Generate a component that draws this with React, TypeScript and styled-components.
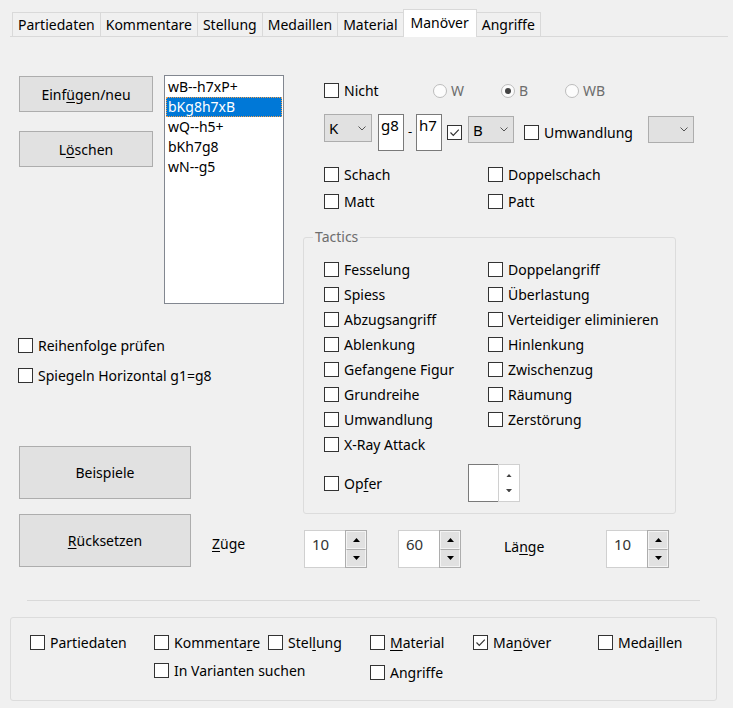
import React from 'react';
import styled, { createGlobalStyle } from 'styled-components';

const GlobalStyle = createGlobalStyle`
  html, body { margin: 0; padding: 0; background: #f0f0f0; }
  body {
    font-family: "Noto Sans", "Open Sans", sans-serif;
    font-size: 14px;
    color: #000;
  }
`;

const Window = styled.div`
  width: 733px;
  height: 708px;
  background: #f0f0f0;
  overflow: hidden;
`;

/* ---------- tabs ---------- */

const TabBar = styled.div`
  display: flex;
  align-items: flex-end;
  height: 37px;
  box-sizing: border-box;
  margin: 0 5px 0 10px;
  padding-left: 3px;
  border-bottom: 1px solid #d9d9d9;
`;

const Tab = styled.div<{ $active?: boolean }>`
  height: ${(p) => (p.$active ? 28 : 25)}px;
  box-sizing: border-box;
  margin-bottom: -1px;
  margin-left: -1px;
  padding: 0 ${(p) => (p.$active ? 7 : 5)}px ${(p) => (p.$active ? 3 : 0)}px;
  display: flex;
  align-items: center;
  border: 1px solid #d9d9d9;
  border-bottom: ${(p) => (p.$active ? 'none' : '1px solid #d9d9d9')};
  background: ${(p) => (p.$active ? '#fff' : '#f0f0f0')};
  position: relative;
  z-index: ${(p) => (p.$active ? 1 : 0)};
  white-space: nowrap;
`;

/* ---------- generic controls ---------- */

const U = styled.span`
  text-decoration: underline;
  text-underline-offset: 2px;
`;

const PushButton = styled.button<{ $w: number; $h: number }>`
  width: ${(p) => p.$w}px;
  height: ${(p) => p.$h}px;
  padding: 0;
  border: 1px solid #adadad;
  background: #e1e1e1;
  font: inherit;
  color: #000;
  flex-shrink: 0;
`;

const CheckItem = styled.label<{ $w?: number; $dy?: number }>`
  display: flex;
  align-items: center;
  gap: 5px;
  height: 15px;
  width: ${(p) => (p.$w ? `${p.$w}px` : 'auto')};
  margin-top: ${(p) => p.$dy ?? 0}px;
  white-space: nowrap;
  flex-shrink: 0;
`;

const Box = styled.span`
  width: 15px;
  height: 15px;
  box-sizing: border-box;
  border: 1px solid #333;
  background: #fff;
  display: flex;
  align-items: center;
  justify-content: center;
  flex-shrink: 0;
`;

const Check = ({ label, checked, w, dy }: { label?: React.ReactNode; checked?: boolean; w?: number; dy?: number }) => (
  <CheckItem $w={w} $dy={dy}>
    <Box>
      {checked && (
        <svg width="13" height="13" viewBox="0 0 13 13">
          <polyline points="2.5,6.5 5.3,9.3 10.8,3.6" fill="none" stroke="#333" strokeWidth="1.2" />
        </svg>
      )}
    </Box>
    {label && <span>{label}</span>}
  </CheckItem>
);

const RadioItem = styled.label<{ $w: number }>`
  display: flex;
  align-items: center;
  gap: 4px;
  width: ${(p) => p.$w}px;
  color: #6d6d6d;
  flex-shrink: 0;
`;

const RadioCircle = styled.span`
  width: 14px;
  height: 14px;
  box-sizing: border-box;
  border: 1px solid #bcbcbc;
  border-radius: 50%;
  background: #fcfcfc;
  display: flex;
  align-items: center;
  justify-content: center;
`;

const RadioDot = styled.span`
  width: 6px;
  height: 6px;
  border-radius: 50%;
  background: #444;
`;

const Radio = ({ label, on, w }: { label: string; on?: boolean; w: number }) => (
  <RadioItem $w={w}>
    <RadioCircle>{on && <RadioDot />}</RadioCircle>
    <span>{label}</span>
  </RadioItem>
);

const ComboBox = styled.div<{ $w: number; $h: number; $dy?: number; $ml?: number }>`
  width: ${(p) => p.$w}px;
  height: ${(p) => p.$h}px;
  margin-top: ${(p) => p.$dy ?? 0}px;
  margin-left: ${(p) => p.$ml ?? 0}px;
  box-sizing: border-box;
  border: 1px solid #adadad;
  background: #e1e1e1;
  display: flex;
  align-items: center;
  justify-content: space-between;
  padding: 0 5px 0 4px;
  font-size: 15px;
  flex-shrink: 0;
`;

const Chevron = () => (
  <svg width="8" height="5" viewBox="0 0 8 5">
    <polyline points="0.5,0.5 4,4 7.5,0.5" fill="none" stroke="#555" strokeWidth="1" />
  </svg>
);

const Combo = ({ value, w, h, dy, ml }: { value?: string; w: number; h: number; dy?: number; ml?: number }) => (
  <ComboBox $w={w} $h={h} $dy={dy} $ml={ml}>
    <span>{value ?? ''}</span>
    <Chevron />
  </ComboBox>
);

const SquareEdit = styled.div<{ $ml?: number }>`
  width: 26px;
  height: 37px;
  box-sizing: border-box;
  margin-left: ${(p) => p.$ml ?? 0}px;
  border: 1px solid #7a7a7a;
  background: #fff;
  padding: 1px 0 0 2px;
  font-size: 15px;
  line-height: 19px;
  flex-shrink: 0;
  overflow: hidden;
`;

const Dash = styled.span`
  width: 12px;
  text-align: center;
  margin-top: 8px;
  line-height: 18px;
  font-size: 13px;
`;

/* ---------- spin boxes ---------- */

const Spin = styled.div`
  display: flex;
  width: 63px;
  height: 38px;
  margin-top: 16px;
  flex-shrink: 0;
`;

const SpinEdit = styled.div`
  flex: 1;
  box-sizing: border-box;
  border: 1px solid #d0d0d0;
  border-right: none;
  background: #fff;
  padding: 4px 0 0 7px;
  font-size: 15px;
  line-height: 18px;
  color: #333;
`;

const SpinButtons = styled.div`
  width: 20px;
  display: flex;
  flex-direction: column;
  border: 1px solid #adadad;
`;

const SpinBtn = styled.div`
  flex: 1;
  background: #e1e1e1;
  border: 1px solid #f4f4f4;
  display: flex;
  align-items: center;
  justify-content: center;
  & + & { border-top: 1px solid #adadad; }
`;

const Tri = ({ down, color = '#000', w = 7 }: { down?: boolean; color?: string; w?: number }) => (
  <svg width={w} height={w / 2 + 0.5} viewBox="0 0 7 4">
    <polygon points={down ? '0,0 7,0 3.5,4' : '0,4 7,4 3.5,0'} fill={color} />
  </svg>
);

const SpinBox = ({ value }: { value: string }) => (
  <Spin>
    <SpinEdit>{value}</SpinEdit>
    <SpinButtons>
      <SpinBtn><Tri /></SpinBtn>
      <SpinBtn><Tri down /></SpinBtn>
    </SpinButtons>
  </Spin>
);

const FlatSpin = styled.div`
  display: flex;
  width: 52px;
  height: 38px;
`;

const FlatSpinEdit = styled.div`
  width: 30px;
  box-sizing: border-box;
  border: 1px solid #7a7a7a;
  border-right: none;
  background: #fff;
`;

const FlatSpinButtons = styled.div`
  flex: 1;
  border: 1px solid #d0d0d0;
  background: #fff;
  display: flex;
  flex-direction: column;
  justify-content: space-around;
  align-items: center;
  padding: 3px 0;
`;

/* ---------- main layout ---------- */

const Body = styled.div`
  display: flex;
  flex-direction: column;
  padding-left: 18px;
`;

const TopSection = styled.div`
  display: flex;
  align-items: flex-start;
`;

const LeftPane = styled.div`
  width: 266px;
  padding-top: 38px;
  display: flex;
  flex-direction: column;
`;

const ListRow = styled.div`
  display: flex;
  align-items: flex-start;
`;

const ButtonColumn = styled.div`
  display: flex;
  flex-direction: column;
  gap: 19px;
  margin: 1px 0 0 1px;
`;

const ListBox = styled.div`
  width: 120px;
  height: 229px;
  box-sizing: border-box;
  margin-left: 11px;
  border: 1px solid #828790;
  background: #fff;
  padding: 1px;
`;

const ListItem = styled.div<{ $selected?: boolean }>`
  height: 20px;
  line-height: 20px;
  padding-left: 2px;
  font-size: 14px;
  box-sizing: border-box;
  background: ${(p) => (p.$selected ? '#0078d7' : 'transparent')};
  color: ${(p) => (p.$selected ? '#fff' : '#000')};
  outline: ${(p) => (p.$selected ? '1px dotted #f0a050' : 'none')};
  outline-offset: -1px;
`;

const LeftChecks = styled.div`
  display: flex;
  flex-direction: column;
  gap: 15px;
  margin-top: 34px;
`;

const ExamplesButton = styled(PushButton)`
  margin: 63px 0 0 1px;
`;

const RightPane = styled.div`
  width: 392px;
  margin-left: 19px;
  padding-top: 46px;
  display: flex;
  flex-direction: column;
`;

const ColorRow = styled.div`
  display: flex;
  align-items: center;
  height: 15px;
  padding-left: 21px;
`;

const MoveRow = styled.div`
  display: flex;
  align-items: flex-start;
  height: 37px;
  margin-top: 16px;
  padding-left: 21px;
`;

const TwoColumns = styled.div<{ $gap: number }>`
  display: grid;
  grid-template-columns: 164px auto;
  grid-auto-rows: 15px;
  row-gap: ${(p) => p.$gap}px;
`;

const CheckGrid = styled(TwoColumns)`
  margin-top: 16px;
  padding-left: 21px;
`;

const Group = styled.fieldset`
  width: 373px;
  box-sizing: border-box;
  margin: 20px 0 0 0;
  padding: 0 0 11px 20px;
  border: 1px solid #dcdcdc;
  border-radius: 3px;
  min-width: 0;
`;

const GroupTitle = styled.legend`
  margin-left: -11px;
  padding: 0 2px;
  line-height: 16px;
  font-size: 14px;
  color: #6d6d6d;
`;

const TacticsGrid = styled(TwoColumns)`
  margin-top: 17px;
`;

const SacrificeRow = styled.div`
  display: flex;
  align-items: center;
  height: 38px;
  margin-top: 12px;
`;

const BottomRow = styled.div`
  display: flex;
  align-items: flex-start;
  padding-left: 1px;
`;

const FieldLabel = styled.div<{ $ml: number; $w: number; $dy: number }>`
  margin-left: ${(p) => p.$ml}px;
  width: ${(p) => p.$w}px;
  margin-top: ${(p) => p.$dy}px;
  line-height: 18px;
  flex-shrink: 0;
`;

const Gap = styled.div<{ $w: number }>`
  width: ${(p) => p.$w}px;
  flex-shrink: 0;
`;

const Divider = styled.div`
  width: 673px;
  height: 1px;
  margin: 32px 0 0 27px;
  background: #d9d9d9;
`;

const SearchGroup = styled.div`
  width: 707px;
  height: 84px;
  box-sizing: border-box;
  margin: 16px 0 0 10px;
  padding: 17px 0 0 19px;
  border: 1px solid #dcdcdc;
  border-radius: 3px;
`;

const SearchGrid = styled.div`
  display: grid;
  grid-template-columns: 124px 114px 102px 103px 125px auto;
  grid-auto-rows: 15px;
  row-gap: 13px;
`;

const tabs = ['Partiedaten', 'Kommentare', 'Stellung', 'Medaillen', 'Material', 'Manöver', 'Angriffe'];
const moves = ['wB--h7xP+', 'bKg8h7xB', 'wQ--h5+', 'bKh7g8', 'wN--g5'];
const tactics: [string, string?][] = [
  ['Fesselung', 'Doppelangriff'],
  ['Spiess', 'Überlastung'],
  ['Abzugsangriff', 'Verteidiger eliminieren'],
  ['Ablenkung', 'Hinlenkung'],
  ['Gefangene Figur', 'Zwischenzug'],
  ['Grundreihe', 'Räumung'],
  ['Umwandlung', 'Zerstörung'],
  ['X-Ray Attack'],
];

export default function App() {
  return (
    <Window>
      <GlobalStyle />
      <TabBar>
        {tabs.map((t) => (
          <Tab key={t} $active={t === 'Manöver'}>{t}</Tab>
        ))}
      </TabBar>

      <Body>
        <TopSection>
          <LeftPane>
            <ListRow>
              <ButtonColumn>
                <PushButton $w={134} $h={36}>Einf<U>ü</U>gen/neu</PushButton>
                <PushButton $w={134} $h={36}>L<U>ö</U>schen</PushButton>
              </ButtonColumn>
              <ListBox>
                {moves.map((m, i) => (
                  <ListItem key={m} $selected={i === 1}>{m}</ListItem>
                ))}
              </ListBox>
            </ListRow>
            <LeftChecks>
              <Check label="Reihenfolge prüfen" />
              <Check label="Spiegeln Horizontal g1=g8" />
            </LeftChecks>
            <ExamplesButton $w={172} $h={53}>Beispiele</ExamplesButton>
          </LeftPane>

          <RightPane>
            <ColorRow>
              <Check label="Nicht" w={109} />
              <Radio label="W" w={68} />
              <Radio label="B" on w={64} />
              <Radio label="WB" w={60} />
            </ColorRow>

            <MoveRow>
              <Combo value="K" w={48} h={28} />
              <SquareEdit $ml={6}>g8</SquareEdit>
              <Dash>-</Dash>
              <SquareEdit>h7</SquareEdit>
              <Gap $w={5} />
              <Check checked dy={11} />
              <Combo value="B" w={46} h={27} dy={2} ml={6} />
              <Gap $w={10} />
              <Check label="Umwandlung" w={124} dy={11} />
              <Combo w={46} h={27} dy={2} />
            </MoveRow>

            <CheckGrid $gap={12}>
              <Check label="Schach" />
              <Check label="Doppelschach" />
              <Check label="Matt" />
              <Check label="Patt" />
            </CheckGrid>

            <Group>
              <GroupTitle>Tactics</GroupTitle>
              <TacticsGrid $gap={10}>
                {tactics.map(([a, b]) => (
                  <React.Fragment key={a}>
                    <Check label={a} />
                    {b ? <Check label={b} /> : <span />}
                  </React.Fragment>
                ))}
              </TacticsGrid>
              <SacrificeRow>
                <Check label={<>Op<U>f</U>er</>} w={144} />
                <FlatSpin>
                  <FlatSpinEdit />
                  <FlatSpinButtons>
                    <Tri color="#444" w={6} />
                    <Tri down color="#444" w={6} />
                  </FlatSpinButtons>
                </FlatSpin>
              </SacrificeRow>
            </Group>
          </RightPane>
        </TopSection>

        <BottomRow>
          <PushButton $w={172} $h={53}><U>R</U>ücksetzen</PushButton>
          <FieldLabel $ml={21} $w={92} $dy={21}><U>Z</U>üge</FieldLabel>
          <SpinBox value="10" />
          <Gap $w={31} />
          <SpinBox value="60" />
          <FieldLabel $ml={43} $w={102} $dy={24}>Lä<U>n</U>ge</FieldLabel>
          <SpinBox value="10" />
        </BottomRow>
      </Body>

      <Divider />

      <SearchGroup>
        <SearchGrid>
          <Check label="Partiedaten" />
          <Check label={<>Kommenta<U>r</U>e</>} />
          <Check label={<>Stel<U>l</U>ung</>} />
          <Check label={<><U>M</U>aterial</>} />
          <Check checked label={<>Ma<U>n</U>över</>} />
          <Check label={<>Meda<U>i</U>llen</>} />
          <span />
          <Check label="In Varianten suchen" />
          <span />
          <Check label="Angriffe" dy={2} />
        </SearchGrid>
      </SearchGroup>
    </Window>
  );
}
